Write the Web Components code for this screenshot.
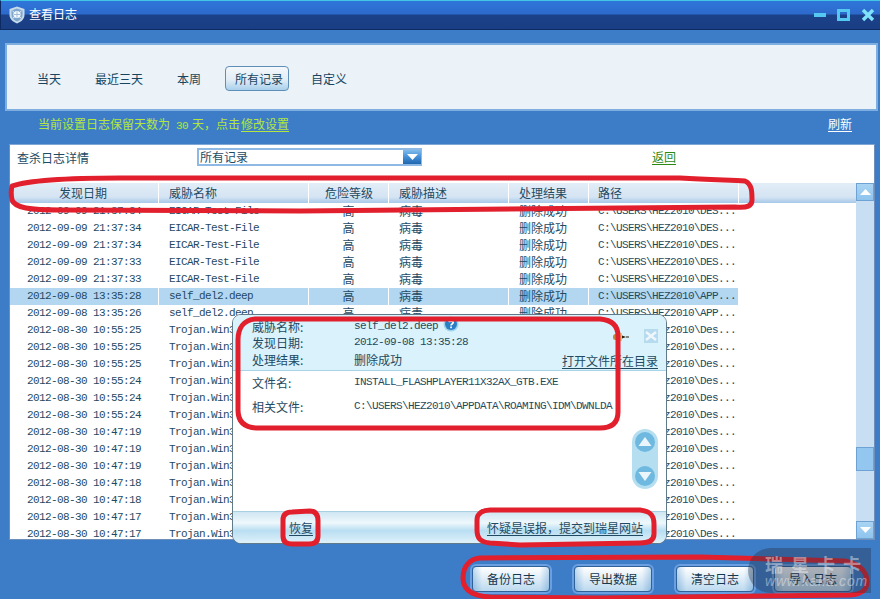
<!DOCTYPE html>
<html lang="zh-CN">
<head>
<meta charset="utf-8">
<title>查看日志</title>
<style>
  html, body { margin: 0; padding: 0; background: #3d7dc8; }
  body { font: 12px/17px "Noto Sans CJK SC", "Liberation Sans", sans-serif; color: #1f4a62; }
</style>
</head>
<body>
<log-window>
  <title-bar>查看日志</title-bar>
  <filter-bar>
    <filter-item>当天</filter-item>
    <filter-item>最近三天</filter-item>
    <filter-item>本周</filter-item>
    <filter-item active>所有记录</filter-item>
    <filter-item>自定义</filter-item>
  </filter-bar>
  <notice-bar></notice-bar>
  <log-panel>
    <log-row date="2012-09-09 21:37:34" name="EICAR-Test-File" path="C:\USERS\HEZ2010\DES..."></log-row>
    <log-row date="2012-09-09 21:37:34" name="EICAR-Test-File" path="C:\USERS\HEZ2010\DES..."></log-row>
    <log-row date="2012-09-09 21:37:34" name="EICAR-Test-File" path="C:\USERS\HEZ2010\DES..."></log-row>
    <log-row date="2012-09-09 21:37:33" name="EICAR-Test-File" path="C:\USERS\HEZ2010\DES..."></log-row>
    <log-row date="2012-09-09 21:37:33" name="EICAR-Test-File" path="C:\USERS\HEZ2010\DES..."></log-row>
    <log-row selected date="2012-09-08 13:35:28" name="self_del2.deep" path="C:\USERS\HEZ2010\APP..."></log-row>
    <log-row date="2012-09-08 13:35:26" name="self_del2.deep" path="C:\USERS\HEZ2010\APP..."></log-row>
    <log-row covered date="2012-08-30 10:55:25" name="Trojan.Win3" path="C:\Users\Hez2010\Des..."></log-row>
    <log-row covered date="2012-08-30 10:55:25" name="Trojan.Win3" path="C:\Users\Hez2010\Des..."></log-row>
    <log-row covered date="2012-08-30 10:55:25" name="Trojan.Win3" path="C:\Users\Hez2010\Des..."></log-row>
    <log-row covered date="2012-08-30 10:55:24" name="Trojan.Win3" path="C:\Users\Hez2010\Des..."></log-row>
    <log-row covered date="2012-08-30 10:55:24" name="Trojan.Win3" path="C:\Users\Hez2010\Des..."></log-row>
    <log-row covered date="2012-08-30 10:55:24" name="Trojan.Win3" path="C:\Users\Hez2010\Des..."></log-row>
    <log-row covered date="2012-08-30 10:47:19" name="Trojan.Win3" path="C:\Users\Hez2010\Des..."></log-row>
    <log-row covered date="2012-08-30 10:47:19" name="Trojan.Win3" path="C:\Users\Hez2010\Des..."></log-row>
    <log-row covered date="2012-08-30 10:47:19" name="Trojan.Win3" path="C:\Users\Hez2010\Des..."></log-row>
    <log-row covered date="2012-08-30 10:47:18" name="Trojan.Win3" path="C:\Users\Hez2010\Des..."></log-row>
    <log-row covered date="2012-08-30 10:47:18" name="Trojan.Win3" path="C:\Users\Hez2010\Des..."></log-row>
    <log-row covered date="2012-08-30 10:47:17" name="Trojan.Win3" path="C:\Users\Hez2010\Des..."></log-row>
    <log-row covered date="2012-08-30 10:47:17" name="Trojan.Win3" path="C:\Users\Hez2010\Des..."></log-row>
  </log-panel>
  <action-bar>
    <action-button>备份日志</action-button>
    <action-button>导出数据</action-button>
    <action-button>清空日志</action-button>
    <action-button last>导入日志</action-button>
  </action-bar>
  <detail-popup></detail-popup>
  <red-marks></red-marks>
  <water-mark></water-mark>
</log-window>

<script>
const MONO = `font-family: "Liberation Mono", "Noto Sans CJK SC", monospace; font-size: 11px; letter-spacing: -0.6px;`;

class LogWindow extends HTMLElement {
  constructor() {
    super();
    this.attachShadow( {mode: 'open'} ).innerHTML = /* template */ `
      <style>
        :host {
          background: #3d7dc8;
          display: block;
          height: 599px;
          overflow: hidden;
          position: relative;
          width: 880px;
        }
      </style>
      <slot></slot>
    `;
  }
}

class TitleBar extends HTMLElement {
  constructor() {
    super();
    this.attachShadow( {mode: 'open'} ).innerHTML = /* template */ `
      <style>
        :host {
          align-items: center;
          background: linear-gradient( #2f76da 0, #2c6acb 13px, #1b4189 14px, #1a3e84 100% );
          border-bottom: 1px solid #0e2a63;
          border-left: 1px solid #0e2a63;
          border-top: 1px solid #41c6e6;
          box-sizing: border-box;
          color: #fff;
          display: flex;
          height: 30px;
          padding: 0 5px 0 8px;
        }
        .title { line-height: 26px; margin: -2px 0 0 4px; }
        svg { display: block; }
        .logo { margin-top: -1px; }
        .controls { align-items: center; display: flex; gap: 11px; margin-left: auto; }
      </style>
      <svg class="logo" width="16" height="18" viewBox="0 0 16 18">
        <path d="M8 .5 15.500 3v6c0 4-3.500 7-7.500 8.500C4 16 .5 13 .5 9V3z" fill="#c6dbec"/>
        <path d="M8 2.500 13.500 4.500v4.500c0 3-2.600 5.300-5.500 6.500C5.100 14.300 2.500 12 2.500 9V4.500z" fill="#7fa6cb"/>
        <circle cx="8" cy="8.500" r="3.600" fill="#f4f9fd"/>
        <path d="M8 5.500v6M5 8.500h6" stroke="#9dbcd8" stroke-width="1"/>
        <path d="M3.500 5 5.500 6.500M12.500 5 10.500 6.500M4 12 5.500 11M12 12 10.500 11" stroke="#e6f0f8" stroke-width="1"/>
      </svg>
      <span class="title"><slot></slot></span>
      <div class="controls">
        <svg width="12" height="12" viewBox="0 0 12 12"><rect x="0" y="4" width="12" height="4" fill="#55c8f2"/></svg>
        <svg width="13" height="12" viewBox="0 0 13 12"><rect x="1.500" y="1.500" width="10" height="9" fill="none" stroke="#55c8f2" stroke-width="3"/></svg>
        <svg width="14" height="14" viewBox="0 0 14 14"><path d="M2 2 12 12M12 2 2 12" stroke="#7fe3fb" stroke-width="3.400"/></svg>
      </div>
    `;
  }
}

class FilterBar extends HTMLElement {
  constructor() {
    super();
    this.attachShadow( {mode: 'open'} ).innerHTML = /* template */ `
      <style>
        :host {
          align-items: center;
          background: #ebf3f8;
          border: 2px solid #7eaee0;
          box-sizing: border-box;
          display: flex;
          gap: 34px;
          height: 68px;
          margin: 13px 2px 0 5px;
          padding: 2px 0 0 30px;
        }
      </style>
      <slot></slot>
    `;
  }
}

class FilterItem extends HTMLElement {
  constructor() {
    super();
    this.attachShadow( {mode: 'open'} ).innerHTML = /* template */ `
      <style>
        :host { color: #17455f; display: block; line-height: 17px; }
        :host( [active] ) {
          background: linear-gradient( #f4f8fb, #e2edf5 55%, #a9d0ec );
          border: 1px solid #5f8fb8;
          border-radius: 4px;
          margin: 0 -12px 0 -10px;
          padding: 3px 5px 3px 9px;
        }
      </style>
      <slot></slot>
    `;
  }
}

class NoticeBar extends HTMLElement {
  constructor() {
    super();
    this.attachShadow( {mode: 'open'} ).innerHTML = /* template */ `
      <style>
        :host {
          align-items: center;
          box-sizing: border-box;
          color: #b4e63f;
          display: flex;
          height: 33px;
          padding: 0 28px 6px 38px;
          white-space: pre;
        }
        u { text-underline-offset: 2px; }
        .mono { ${MONO} }
        .day { margin-left: -2px; }
        .edit { margin-left: 1px; }
        .refresh { color: #fff; margin: -3px 0 0 auto; }
      </style>
      <span>当前设置日志保留天数为<span class="mono"> 30 </span><span class="day">天，点击</span><u class="edit">修改设置</u></span>
      <u class="refresh">刷新</u>
    `;
  }
}

class LogPanel extends HTMLElement {
  constructor() {
    super();
    this.attachShadow( {mode: 'open'} ).innerHTML = /* template */ `
      <style>
        :host {
          --cols: 149px 150px 80px 120px 80px 150px;
          background: #fff;
          border: 1px solid #6f8fb8;
          border-top-color: #7fa6d4;
          box-sizing: border-box;
          display: flex;
          flex-direction: column;
          height: 396px;
          margin: 0 5px 0 9px;
        }
        .tools {
          align-items: flex-start;
          display: flex;
          flex: none;
          height: 38px;
        }
        .label { margin: 4px 0 0 7px; width: 180px; }
        .select {
          align-items: center;
          border: 2px solid #8db9e4;
          border-right-width: 1px;
          box-sizing: border-box;
          display: flex;
          height: 18px;
          margin-top: 3px;
          padding-left: 1px;
          width: 225px;
        }
        .select span { line-height: 12px; }
        .arrow {
          align-items: center;
          background: linear-gradient( #7fbcec, #3f8ad2 55%, #1f66ad );
          display: flex;
          height: 14px;
          justify-content: center;
          margin-left: auto;
          width: 18px;
        }
        .back { color: #2c8a12; margin: 3px 0 0 230px; text-decoration: underline; text-underline-offset: 2px; }
        .grid { display: flex; flex: 1; min-height: 0; }
        .table { display: flex; flex: 1; flex-direction: column; min-width: 0; }
        .head {
          background: linear-gradient( #e2edf7, #d5e4f3 70%, #a6c8e8 );
          display: grid;
          flex: none;
          grid-template-columns: var( --cols ) 1fr;
          height: 20px;
          line-height: 19px;
        }
        .head span { border-right: 1.500px solid #fff; box-sizing: border-box; padding-left: 10px; }
        .head .date { padding-left: 49px; }
        .head .level { padding-left: 16px; }
        .head .path { padding-left: 9px; }
        .head .tail { border-right: 0; }
        .rows { flex: 1; min-height: 0; overflow: hidden; }
        .bar { background: #c8dff3; display: flex; flex: none; flex-direction: column; width: 18px; }
        .btn {
          align-items: center;
          background: linear-gradient( #a9d4f3, #8fc4ee );
          border: 1px solid #6ea2d2;
          box-sizing: border-box;
          display: flex;
          height: 18px;
          justify-content: center;
        }
        .thumb { background: #94c7ef; border: 1px solid #6ea2d2; box-sizing: border-box; height: 24px; margin-top: 246px; }
        .btn.down { margin-top: auto; }
      </style>
      <div class="tools">
        <span class="label">查杀日志详情</span>
        <div class="select">
          <span>所有记录</span>
          <div class="arrow"><svg width="11" height="6" viewBox="0 0 11 6"><path d="M0 0h11L5.500 6z" fill="#fff"/></svg></div>
        </div>
        <span class="back">返回</span>
      </div>
      <div class="grid">
        <div class="table">
          <div class="head">
            <span class="date">发现日期</span>
            <span>威胁名称</span>
            <span class="level">危险等级</span>
            <span>威胁描述</span>
            <span>处理结果</span>
            <span class="path">路径</span>
            <span class="tail"></span>
          </div>
          <div class="rows"><slot></slot></div>
        </div>
        <div class="bar">
          <div class="btn"><svg width="11" height="6" viewBox="0 0 11 6"><path d="M0 6h11L5.500 0z" fill="#fff"/></svg></div>
          <div class="thumb"></div>
          <div class="btn down"><svg width="11" height="6" viewBox="0 0 11 6"><path d="M0 0h11L5.500 6z" fill="#fff"/></svg></div>
        </div>
      </div>
    `;
  }
}

class LogRow extends HTMLElement {
  constructor() {
    super();
    this.attachShadow( {mode: 'open'} );
  }

  connectedCallback() {
    // Rows under the popup leave their middle cells empty
    const covered = this.hasAttribute( 'covered' );

    this.shadowRoot.innerHTML = /* template */ `
      <style>
        :host {
          display: grid;
          grid-template-columns: var( --cols ) 1fr;
          height: 17px;
          line-height: 17px;
          white-space: nowrap;
        }
        :host( [selected] ) { --row: #b3d6f1; }
        span { background: var( --row, transparent ); box-sizing: border-box; overflow: hidden; padding-left: 10px; }
        span:not( :last-child ) { border-right: 1px solid #fff; }
        .cjk { line-height: 15px; }
        .mono { ${MONO} }
        .date { padding-left: 17px; }
        .level { padding: 0; text-align: center; }
        .path { padding-left: 9px; }
        .tail { background: none; }
      </style>
      <span class="mono date">${this.getAttribute( 'date' )}</span>
      <span class="mono">${this.getAttribute( 'name' )}</span>
      <span class="cjk level">${covered ? '' : '高'}</span>
      <span class="cjk">${covered ? '' : '病毒'}</span>
      <span class="cjk">${covered ? '' : '删除成功'}</span>
      <span class="mono path">${this.getAttribute( 'path' )}</span>
      <span class="tail"></span>
    `;
  }
}

class ActionBar extends HTMLElement {
  constructor() {
    super();
    this.attachShadow( {mode: 'open'} ).innerHTML = /* template */ `
      <style>
        :host {
          display: flex;
          gap: 24px;
          justify-content: flex-end;
          padding: 26px 28px 0 0;
        }
      </style>
      <slot></slot>
    `;
  }
}

class ActionButton extends HTMLElement {
  constructor() {
    super();
    this.attachShadow( {mode: 'open'} ).innerHTML = /* template */ `
      <style>
        :host {
          background: linear-gradient( 90deg, #c3dcf0, #fff 12%, #fff 88%, #c3dcf0 ), linear-gradient( #fff, #bcd9ef );
          background-blend-mode: multiply;
          border: 1px solid #2f6299;
          border-radius: 4px;
          box-shadow: 0 0 0 2px #6a9fe2;
          box-sizing: border-box;
          color: #17374d;
          display: block;
          height: 26px;
          line-height: 24px;
          text-align: center;
          width: 78px;
        }
        :host( [last] ) { margin-left: -4px; }
      </style>
      <slot></slot>
    `;
  }
}

class DetailPopup extends HTMLElement {
  constructor() {
    super();
    this.attachShadow( {mode: 'open'} ).innerHTML = /* template */ `
      <style>
        :host {
          background: #fff;
          border: 1px solid #5f7a88;
          border-radius: 9px;
          box-sizing: border-box;
          display: flex;
          flex-direction: column;
          height: 230px;
          left: 232px;
          overflow: hidden;
          position: absolute;
          top: 314px;
          width: 435px;
        }
        .mono { ${MONO} }
        u { color: #1f4a62; text-underline-offset: 2px; }
        .head {
          background: #d9f2fb;
          border-bottom: 1px solid #a9d3e6;
          box-sizing: border-box;
          flex: none;
          height: 56px;
          padding: 3px 0 0 19px;
          position: relative;
        }
        .line { align-items: center; display: flex; height: 16.500px; }
        .key { flex: none; width: 102px; }
        .help { margin-left: 5px; margin-top: -5px; }
        .pin { position: absolute; right: 37px; top: 18px; }
        .close {
          align-items: center;
          background: #b7dbee;
          display: flex;
          height: 14px;
          justify-content: center;
          position: absolute;
          right: 8px;
          top: 14px;
          width: 14px;
        }
        .open { bottom: 1px; position: absolute; right: 8px; }
        .body { flex: 1; padding: 3px 0 0 19px; position: relative; }
        .body .line { height: 17px; margin-bottom: 7px; }
        .pager {
          align-items: center;
          background: #b5dff0;
          border-radius: 13px;
          box-sizing: border-box;
          display: flex;
          flex-direction: column;
          height: 60px;
          justify-content: space-between;
          padding: 2px 0;
          position: absolute;
          right: 8px;
          top: 58px;
          width: 26px;
        }
        .foot {
          background: linear-gradient( #cfe6f3, #eef8fc 35%, #b9def2 60%, #dff1f9 );
          border-top: 1px solid #a9cfe2;
          box-sizing: border-box;
          display: flex;
          flex: none;
          height: 32px;
          justify-content: space-between;
          line-height: 32px;
          padding: 0 23px 0 56px;
        }
      </style>
      <div class="head">
        <div class="line"><span class="key">威胁名称:</span><span class="mono">self_del2.deep</span>
          <svg class="help" width="16" height="16" viewBox="0 0 16 16"><circle cx="8" cy="8" r="7.500" fill="#9fd2ee"/><circle cx="8" cy="8" r="6" fill="#2a7fc4"/><path d="M5.800 6.200C6 4.800 10.200 4.500 10.200 6.600 10.200 8 8 8 8 9.500" fill="none" stroke="#fff" stroke-width="1.600"/><rect x="7.200" y="10.500" width="1.700" height="1.700" fill="#fff"/></svg>
        </div>
        <div class="line"><span class="key">发现日期:</span><span class="mono">2012-09-08 13:35:28</span></div>
        <div class="line"><span class="key">处理结果:</span><span>删除成功</span></div>
        <svg class="pin" width="16" height="8" viewBox="0 0 16 8"><rect x="0" y="1" width="6" height="6" rx="2.500" fill="#c08a3a"/><rect x="6" y="0" width="3" height="8" fill="#e6c46a"/><path d="M9 2.500 13 4 9 5.500z" fill="#2a1c08"/><path d="M13 4h3" stroke="#2a1c08"/></svg>
        <div class="close"><svg width="12" height="10" viewBox="0 0 12 10"><path d="M1 1 11 9M11 1 1 9" stroke="#eef7fc" stroke-width="2.400"/></svg></div>
        <u class="open">打开文件所在目录</u>
      </div>
      <div class="body">
        <div class="line"><span class="key">文件名:</span><span class="mono">INSTALL_FLASHPLAYER11X32AX_GTB.EXE</span></div>
        <div class="line"><span class="key">相关文件:</span><span class="mono">C:\\USERS\\HEZ2010\\APPDATA\\ROAMING\\IDM\\DWNLDA</span></div>
        <div class="pager">
          <svg width="22" height="22" viewBox="0 0 22 22"><circle cx="11" cy="11" r="10" fill="#6fb9e0"/><path d="M4.500 15 11 6 17.500 15z" fill="#eaf6fc"/></svg>
          <svg width="22" height="22" viewBox="0 0 22 22"><circle cx="11" cy="11" r="10" fill="#6fb9e0"/><path d="M4.500 7 11 16 17.500 7z" fill="#eaf6fc"/></svg>
        </div>
      </div>
      <div class="foot"><u>恢复</u><u>怀疑是误报，提交到瑞星网站</u></div>
    `;
  }
}

class RedMarks extends HTMLElement {
  constructor() {
    super();
    this.attachShadow( {mode: 'open'} ).innerHTML = /* template */ `
      <style>
        :host { display: block; left: 0; pointer-events: none; position: absolute; top: 0; }
        svg { display: block; }
        path { fill: none; stroke: #e21f2d; stroke-linecap: round; stroke-linejoin: round; stroke-width: 5; }
      </style>
      <svg width="880" height="599" viewBox="0 0 880 599">
        <path d="M12 186C30 180 70 178 120 178L680 178C710 180 730 180 745 181 752 184 752 192 752 200 752 206 748 208 735 207L300 211 60 210C30 210 15 208 12 200 11 195 11 190 12 186Z"/>
        <path d="M255 319 600 319C612 320 618 326 618 336L618 412C618 423 612 428 600 428L258 428C245 428 238 422 238 410L238 340C238 328 244 320 255 319Z"/>
        <path d="M292 512 310 511C316 511 318 515 318 521L318 536C318 541 315 544 309 544L292 544C286 544 283 541 283 536L283 520C283 515 286 512 292 512Z"/>
        <path d="M490 510 640 510C650 511 654 515 654 524L654 534C654 541 648 543 640 543L520 545 490 543C480 542 477 538 477 530L477 520C477 514 482 510 490 510Z"/>
        <path d="M480 558 700 557 845 561C860 564 867 572 867 582 867 590 862 594 850 595L600 598 490 597C472 596 463 590 463 578 463 566 470 559 480 558Z"/>
      </svg>
    `;
  }
}

class WaterMark extends HTMLElement {
  constructor() {
    super();
    this.attachShadow( {mode: 'open'} ).innerHTML = /* template */ `
      <style>
        :host {
          background: rgba( 40, 50, 70, .38 );
          border-radius: 26px 0 0 26px;
          box-sizing: border-box;
          color: rgba( 255, 255, 255, .42 );
          display: block;
          height: 45px;
          left: 748px;
          padding: 7px 0 0 17px;
          position: absolute;
          top: 548px;
          width: 123px;
        }
        .cn { font-size: 18px; font-weight: 700; letter-spacing: 8px; line-height: 18px; white-space: nowrap; }
        .en { font: italic 14px/16px "Liberation Sans", sans-serif; letter-spacing: .8px; white-space: nowrap; }
      </style>
      <div class="cn">瑞星卡卡</div>
      <div class="en">www.kaka.com</div>
    `;
  }
}

window.customElements.define( 'log-window', LogWindow );
window.customElements.define( 'title-bar', TitleBar );
window.customElements.define( 'filter-bar', FilterBar );
window.customElements.define( 'filter-item', FilterItem );
window.customElements.define( 'notice-bar', NoticeBar );
window.customElements.define( 'log-panel', LogPanel );
window.customElements.define( 'log-row', LogRow );
window.customElements.define( 'action-bar', ActionBar );
window.customElements.define( 'action-button', ActionButton );
window.customElements.define( 'detail-popup', DetailPopup );
window.customElements.define( 'red-marks', RedMarks );
window.customElements.define( 'water-mark', WaterMark );
</script>
</body>
</html>
